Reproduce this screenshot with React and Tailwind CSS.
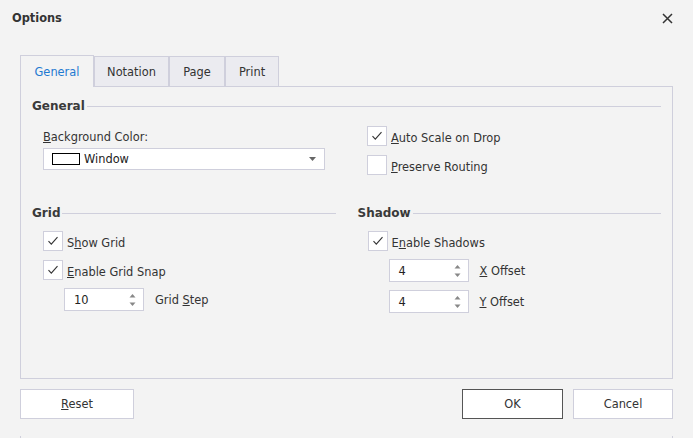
import React from 'react';

const border = 'border-[#cfcfdc]';

function Check({ checked, children }) {
  return (
    <div className="flex items-center h-[20px]">
      <div className={`w-[20px] h-[20px] border ${border} bg-white flex items-center justify-center`}>
        {checked && (
          <svg width="12" height="12" viewBox="0 0 12 12" aria-hidden="true">
            <path d="M1.5 6.2 L4.3 9.2 L10.5 2.2" fill="none" stroke="#333" strokeWidth="1.1" />
          </svg>
        )}
      </div>
      <span className="ml-[4px] leading-[16px] pt-[3px]">{children}</span>
    </div>
  );
}

function Spin({ value, children }) {
  return (
    <div className="flex items-center">
      <div className={`w-[80px] h-[23px] border ${border} bg-white flex items-center pl-[9px] pr-[7px]`}>
        <span className="flex-1 text-[#222] pt-[2px]">{value}</span>
        <svg width="7" height="14" viewBox="0 0 7 14" aria-hidden="true">
          <path d="M0.5 4.5 L3.5 1 L6.5 4.5 Z" fill="#888" />
          <path d="M0.5 9.5 L3.5 13 L6.5 9.5 Z" fill="#888" />
        </svg>
      </div>
      <span className="ml-[11px] pt-[3px]">{children}</span>
    </div>
  );
}

function GroupHeader({ title }) {
  return (
    <div className="flex items-center h-[16px]">
      <span className="font-bold text-[12px] text-[#3a3a3a] pt-[2px]">{title}</span>
      <div className="flex-1 h-px bg-[#cfcfdc] ml-[2px] mt-[2px]" />
    </div>
  );
}

export default function App() {
  return (
    <div
      className="w-[693px] h-[438px] bg-[#f3f3f3] text-[11.4px] text-[#333] overflow-hidden flex flex-col"
      style={{ fontFamily: '"DejaVu Sans", Verdana, sans-serif' }}
    >
      {/* Title bar */}
      <div className="h-[36px] flex items-center justify-between pl-[12px] pr-[20px] shrink-0">
        <span className="font-bold pt-[2px]">Options</span>
        <svg width="11" height="11" viewBox="0 0 11 11" aria-hidden="true">
          <path d="M1 1 L10 10 M10 1 L1 10" stroke="#333" strokeWidth="1.5" />
        </svg>
      </div>

      {/* Tabs */}
      <div className="mt-[19px] pl-[20px] flex items-end h-[31px] shrink-0">
        <div className={`w-[74px] h-[32px] mb-[-1px] relative z-10 border-l border-t border-r ${border} bg-[#f3f3f3] flex items-center justify-center text-[#1f7ad1] pt-[2px]`}>
          General
        </div>
        <div className={`w-[75px] h-[30px] border-l border-t border-r ${border} bg-[#ebebf0] flex items-center justify-center pt-[2px]`}>
          Notation
        </div>
        <div className={`w-[56px] h-[30px] border-l border-t border-r ${border} bg-[#ebebf0] flex items-center justify-center pt-[2px]`}>
          Page
        </div>
        <div className={`w-[54px] h-[30px] border-l border-t border-r ${border} bg-[#ebebf0] flex items-center justify-center pt-[2px]`}>
          Print
        </div>
      </div>

      {/* Panel */}
      <div className={`mx-[20px] w-[653px] h-[293px] shrink-0 border ${border} pt-[10px] px-[11px]`}>
        <GroupHeader title="General" />
        <div className="flex mt-[13px]">
          <div className="pl-[11px] w-[293px]">
            <div className="mt-[2px] h-[16px] leading-[16px] pt-[1px]"><u>B</u>ackground Color:</div>
            <div className={`mt-[4px] w-[282px] h-[22px] border ${border} bg-white flex items-center pl-[8px] pr-[8px]`}>
              <div className="w-[28px] h-[12px] border border-black bg-white" />
              <span className="ml-[4px] flex-1 text-[#222] pt-[2px]">Window</span>
              <svg width="7" height="4" viewBox="0 0 7 4" aria-hidden="true">
                <path d="M0 0 L7 0 L3.5 4 Z" fill="#666" />
              </svg>
            </div>
          </div>
          <div className="ml-[42px] flex flex-col gap-[9px]">
            <Check checked><u>A</u>uto Scale on Drop</Check>
            <Check><u>P</u>reserve Routing</Check>
          </div>
        </div>

        <div className="grid grid-cols-2 gap-[22px] mt-[29px]">
          <div>
            <GroupHeader title="Grid" />
            <div className="pl-[11px] mt-[11px] flex flex-col gap-[9px]">
              <Check checked>S<u>h</u>ow Grid</Check>
              <Check checked><u>E</u>nable Grid Snap</Check>
            </div>
            <div className="pl-[32px] mt-[8px]">
              <Spin value="10">Grid <u>S</u>tep</Spin>
            </div>
          </div>
          <div>
            <GroupHeader title="Shadow" />
            <div className="pl-[10px] mt-[11px]">
              <Check checked>E<u>n</u>able Shadows</Check>
            </div>
            <div className="pl-[31px] mt-[8px] flex flex-col gap-[8px]">
              <Spin value="4"><u>X</u> Offset</Spin>
              <Spin value="4"><u>Y</u> Offset</Spin>
            </div>
          </div>
        </div>
      </div>

      {/* Buttons */}
      <div className="mt-[10px] px-[20px] flex items-center shrink-0">
        <button className={`w-[114px] h-[30px] border ${border} bg-white text-[#333] pt-[2px]`}>
          <u>R</u>eset
        </button>
        <div className="flex-1" />
        <button className="w-[101px] h-[30px] border border-[#555] bg-white text-[#333] pt-[2px]">OK</button>
        <button className={`ml-[10px] w-[100px] h-[30px] border ${border} bg-white text-[#333] pt-[2px]`}>Cancel</button>
      </div>
      <div className={`mt-[17px] mx-[20px] h-[4px] border-l border-r ${border}`} />
    </div>
  );
}
